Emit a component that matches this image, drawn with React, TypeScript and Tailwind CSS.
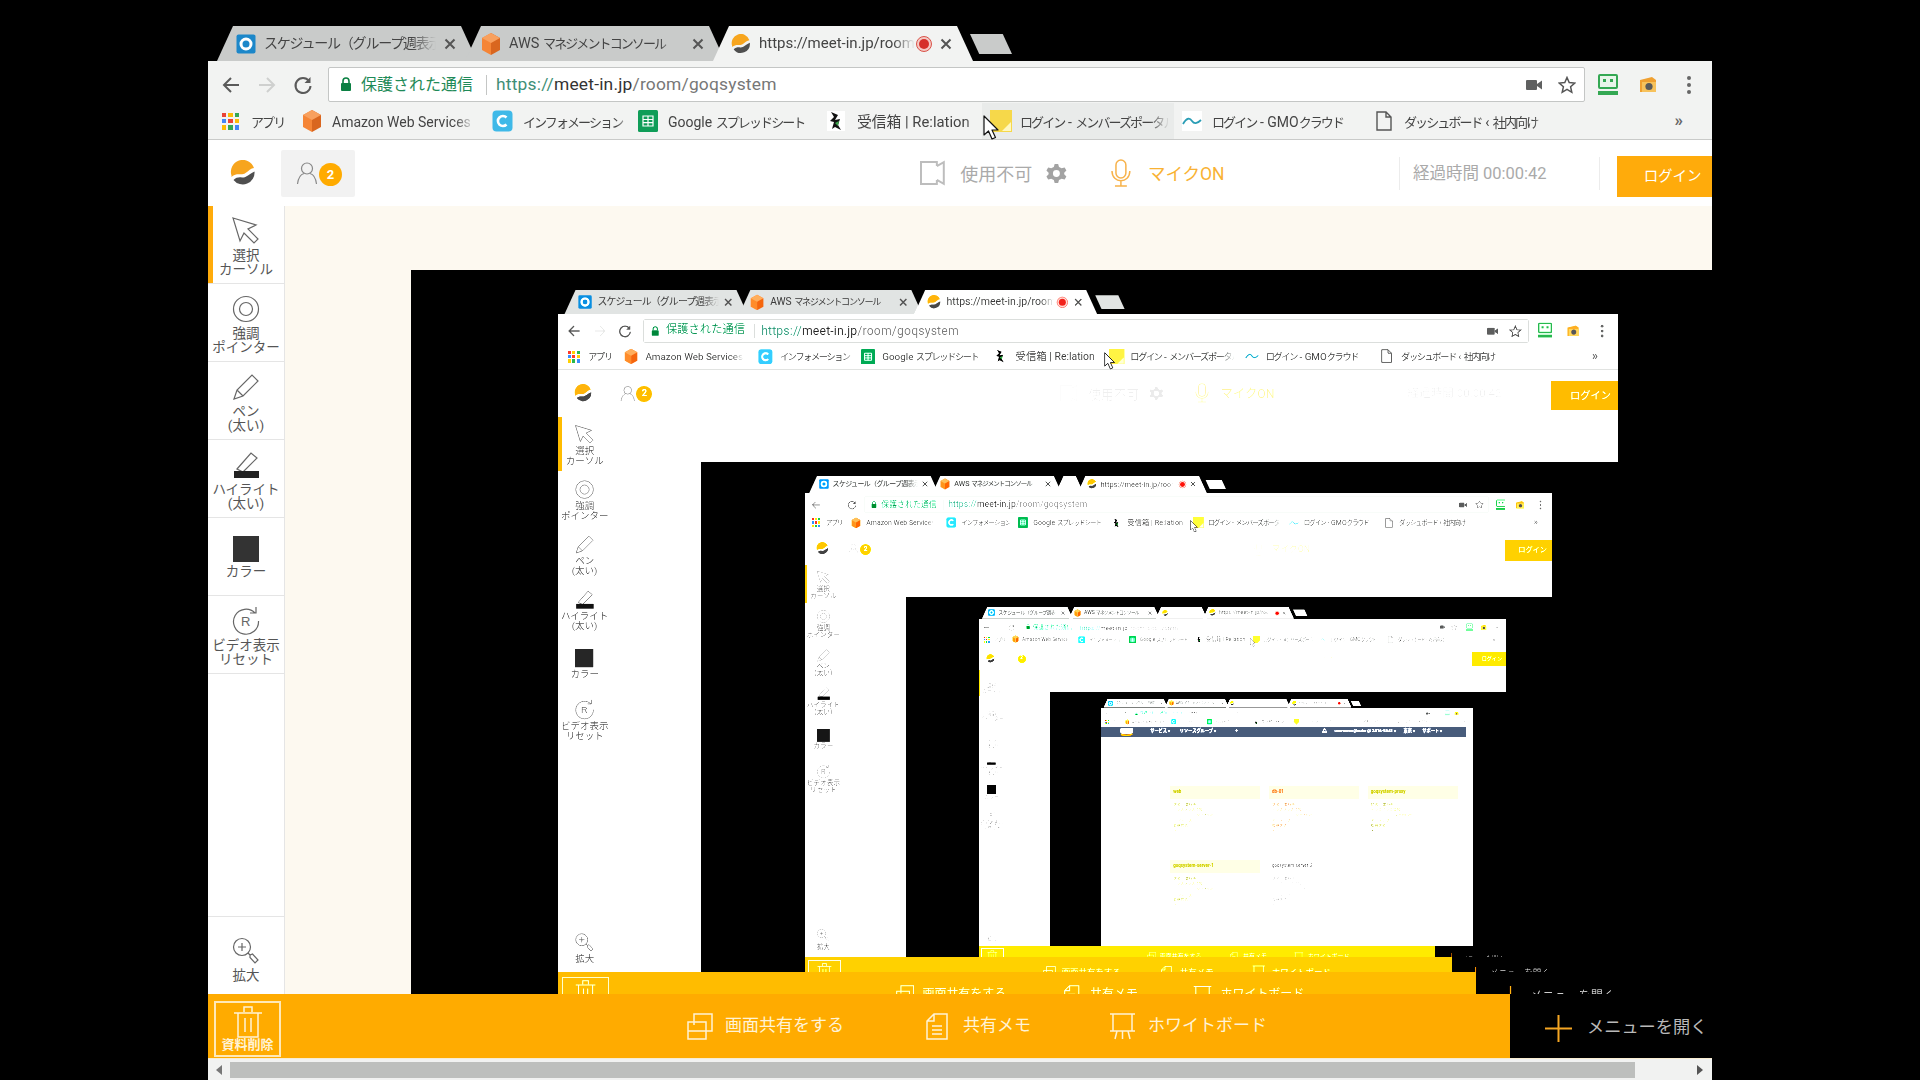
import React from "react";

const fade = "[mask-image:linear-gradient(to_right,black_86%,transparent)]";

const K = ({ children }: { children: React.ReactNode }) => <span className="text-[13px] tracking-[-1.9px]">{children}</span>;

function Logo({ s = 26 }: { s?: number }) {
  return (
    <svg width={s} height={s} viewBox="0 0 26 26" className="shrink-0">
      <path d="M1.5 15.5A11.8 11.8 0 0 1 24 8C21 8 18.5 11 15.5 13C12 15.5 9 13.5 6 14.5C4 15 2.5 16 1.5 17Z" fill="#f7a51e" />
      <path d="M3.5 20C6 17.5 9 17 12 17.5C16 18 19 14 24.5 11.5A11.8 11.8 0 0 1 3.5 20Z" fill="#4f4f4f" />
    </svg>
  );
}
function Cube({ s = 20 }: { s?: number }) {
  return (
    <svg width={s} height={s + 4} viewBox="0 0 20 24" className="shrink-0">
      <path d="M10 1L19 6V18L10 23Z" fill="#d9661f" />
      <path d="M10 1L1 6V18L10 23Z" fill="#f58536" />
      <path d="M10 1L19 6L10 11L1 6Z" fill="#f8a05e" />
    </svg>
  );
}
function Sched() {
  return (
    <svg width="20" height="20" viewBox="0 0 20 20" className="shrink-0">
      <rect x="0.5" y="0.5" width="19" height="19" rx="2" fill="#1c87c9" />
      <circle cx="10" cy="10" r="5" fill="none" stroke="#fff" strokeWidth="3" />
    </svg>
  );
}
function Close() {
  return (
    <svg width="12" height="12" viewBox="0 0 12 12" className="shrink-0">
      <path d="M1.5 1.5L10.5 10.5M10.5 1.5L1.5 10.5" stroke="#555" strokeWidth="2" />
    </svg>
  );
}
function Tab({ w, active, extra, icon, text, rec, pl, cls = "" }: { w: number; active?: boolean; extra?: boolean; icon?: React.ReactNode; text?: React.ReactNode; rec?: boolean; pl: number; cls?: string }) {
  return (
    <div
      className={`relative -ml-[12px] first:ml-0 flex h-[35px] mt-px shrink-0 items-center overflow-hidden [clip-path:polygon(16px_0,calc(100%-16px)_0,100%_100%,0_100%)] ${active || extra ? "bg-[#f2f3f2]" : "bg-[#c9cbca]"} ${active ? "z-10" : ""}`}
      style={{ width: w, paddingLeft: pl }}
    >
      {icon}
      {text && <span className={`ml-2 w-[150px] grow overflow-hidden whitespace-nowrap text-[#444] ${cls} ${fade}`}>{text}</span>}
      {rec && (
        <svg width="18" height="18" viewBox="0 0 18 18" className="-mr-[1px] shrink-0">
          <circle cx="9" cy="9" r="7.5" fill="#f4c9c4" stroke="#d9534a" strokeWidth="1" />
          <circle cx="9" cy="9" r="5" fill="#d6302a" />
        </svg>
      )}
      {text && <span className="mr-[21px] ml-[8px]"><Close /></span>}
    </div>
  );
}
function Tabs({ level }: { level: number }) {
  const extra = [0, 0, 56, 147, 260][level];
  return (
    <div className="flex h-[36px] pl-[9px]">
      <Tab w={260} pl={19} icon={<Sched />} cls="text-[14px] tracking-[-1.2px]" text="スケジュール（グループ週表示" />
      <Tab w={260} pl={16} icon={<Cube />} cls="text-[14.5px]" text={<>AWS <K>マネジメントコンソール</K></>} />
      {extra > 0 && <Tab w={extra} pl={extra > 100 ? 18 : 4} extra icon={extra > 100 ? <Logo s={18} /> : undefined} />}
      <Tab w={260} pl={18} active icon={<Logo s={20} />} cls="text-[15px]" text="https://meet-in.jp/room/goqsystem" rec />
      <div className="mt-[9px] -ml-[3px] h-[20px] w-[42px] bg-[#c9cbca] [clip-path:polygon(0_0,78%_0,100%_100%,22%_100%)]" />
    </div>
  );
}
function Toolbar() {
  return (
    <div className="flex h-[42px] items-center bg-[#f2f3f2] pt-[5px]">
      <svg width="20" height="20" viewBox="0 0 20 20" className="ml-[13px]">
        <path d="M18 10H3M10 3L3 10L10 17" fill="none" stroke="#5a5a5a" strokeWidth="2" />
      </svg>
      <svg width="20" height="20" viewBox="0 0 20 20" className="ml-[16px]">
        <path d="M2 10H17M10 3L17 10L10 17" fill="none" stroke="#cfd0cf" strokeWidth="2" />
      </svg>
      <svg width="20" height="20" viewBox="0 0 20 20" className="ml-[16px]">
        <path d="M16 6A7.5 7.5 0 1 0 17.5 11" fill="none" stroke="#5a5a5a" strokeWidth="2" />
        <path d="M17.5 2V8H11.5Z" fill="#5a5a5a" />
      </svg>
      <div className="ml-[15px] flex h-[35px] w-[1257px] items-center rounded-[2px] border border-[#c4c6c5] bg-white">
        <svg width="12" height="15" viewBox="0 0 12 15" className="ml-[11px]">
          <path d="M3 6V4A3 3 0 0 1 9 4V6" fill="none" stroke="#0b8043" strokeWidth="1.6" />
          <rect x="1" y="6" width="10" height="8" rx="1" fill="#0b8043" />
        </svg>
        <span className="ml-[9px] text-[16px] whitespace-nowrap text-[#1f8a58]">保護された通信</span>
        <span className="ml-[13px] h-[20px] w-px bg-[#c4c6c5]" />
        <span className="ml-[9px] text-[17.4px] tracking-[0.2px] whitespace-nowrap text-[#777]">
          <span className="text-[#3f8f77]">https://</span>
          <span className="text-[#333]">meet-in.jp</span>/room/goqsystem
        </span>
        <svg width="16" height="12" viewBox="0 0 16 12" className="ml-auto">
          <rect x="0" y="1" width="11" height="10" rx="1" fill="#5f6060" />
          <path d="M11 5L16 1.5V10.5L11 7Z" fill="#5f6060" />
        </svg>
        <svg width="18" height="18" viewBox="0 0 18 18" className="mr-[8px] ml-[16px]">
          <path d="M9 1.5L11.2 6.6L16.8 7.1L12.6 10.8L13.8 16.3L9 13.4L4.2 16.3L5.4 10.8L1.2 7.1L6.8 6.6Z" fill="none" stroke="#555" strokeWidth="1.5" />
        </svg>
      </div>
      <svg width="20" height="24" viewBox="0 0 20 24" className="ml-[13px]">
        <rect x="1" y="2" width="18" height="13" rx="1" fill="#e8f5ea" stroke="#34a853" strokeWidth="2" />
        <rect x="5" y="6" width="3" height="3" fill="#34a853" />
        <rect x="12" y="6" width="3" height="3" fill="#34a853" />
        <rect x="0" y="18" width="20" height="4" fill="#34a853" />
      </svg>
      <svg width="20" height="20" viewBox="0 0 20 20" className="ml-[20px]">
        <path d="M2 5L14 2L18 5V17H2Z" fill="#f0a030" />
        <rect x="4" y="7" width="14" height="10" fill="#f7c25c" />
        <circle cx="11" cy="11.5" r="3.6" fill="#5a5a5a" />
      </svg>
      <svg width="6" height="20" viewBox="0 0 6 20" className="ml-[28px]">
        <circle cx="3" cy="3" r="2" fill="#666" />
        <circle cx="3" cy="10" r="2" fill="#666" />
        <circle cx="3" cy="17" r="2" fill="#666" />
      </svg>
    </div>
  );
}
function Apps() {
  const c = ["#ea4335", "#fbbc05", "#34a853", "#4285f4", "#ea4335", "#fbbc05", "#fbbc05", "#34a853", "#4285f4"];
  return (
    <div className="grid h-[17px] w-[17px] shrink-0 grid-cols-3 gap-[2px]">
      {c.map((x, i) => (
        <span key={i} style={{ background: x }} />
      ))}
    </div>
  );
}
function Bm({ w, icon, text, textW, cls = "", gap = 10 }: { w: number; icon: React.ReactNode; text: React.ReactNode; textW: number; cls?: string; gap?: number }) {
  return (
    <div className={`flex h-full shrink-0 items-center ${cls}`} style={{ width: w }}>
      {icon}
      <span className={`overflow-hidden pt-[2px] text-[14px] whitespace-nowrap text-[#444] ${fade}`} style={{ width: textW, marginLeft: gap }}>
        {text}
      </span>
    </div>
  );
}
function Bookmarks() {
  return (
    <div className="relative flex h-[37px] items-center border-b border-[#c9cac9] bg-[#f2f3f2] pl-[14px]">
      <Bm w={80} icon={<Apps />} text={<K>アプリ</K>} textW={40} gap={12} />
      <Bm w={190} icon={<Cube />} text="Amazon Web Services" textW={143} />
      <Bm
        w={146}
        icon={
          <svg width="21" height="22" viewBox="0 0 21 22" className="shrink-0">
            <rect x="0.5" y="0.5" width="20" height="21" rx="4" fill="#3fb9e8" />
            <path d="M14.5 7.5A5 5 0 1 0 14.5 14.5" fill="none" stroke="#fff" strokeWidth="2.6" />
          </svg>
        }
        text={<K>インフォメーション</K>}
        textW={108}
      />
      <Bm
        w={189}
        icon={
          <svg width="20" height="22" viewBox="0 0 20 22" className="shrink-0">
            <rect width="20" height="22" rx="1.5" fill="#0f9d58" />
            <path d="M5 6H15V16H5ZM5 9.5H15M5 12.7H15M10 6V16" fill="none" stroke="#fff" strokeWidth="1.2" />
          </svg>
        }
        text={<>Google <K>スプレッドシート</K></>}
        textW={160}
      />
      <Bm
        w={155}
        icon={
          <svg width="18" height="20" viewBox="0 0 18 20" className="shrink-0">
            <rect width="18" height="20" fill="#fff" />
            <path d="M4 1L11 4L8 9L13 8L11 14L14 19L8 16L5 18L7 11L3 10L7 6Z" fill="#111" />
            <path d="M8 12L12 10L11 15Z" fill="#3aa34a" />
          </svg>
        }
        text={<span className="text-[14.8px]">受信箱 | Re:lation</span>}
        textW={125}
        gap={12}
      />
      <Bm
        w={192}
        cls="bg-[#e9ebea] pl-[8px]"
        icon={
          <svg width="22" height="22" viewBox="0 0 22 22" className="shrink-0">
            <rect width="22" height="22" fill="#f6d84a" />
            <path d="M12 21L21 12V21Z" fill="#fff8c0" />
          </svg>
        }
        text={<><K>ログイン</K> - <K>メンバーズポータル</K></>}
        textW={150}
        gap={8}
      />
      <Bm
        w={194}
        cls="ml-[8px]"
        icon={
          <svg width="20" height="20" viewBox="0 0 20 20" className="shrink-0">
            <rect width="20" height="20" fill="#fff" />
            <path d="M1 13C5 6 8 7 10 10C12 13 15 13 19 9" fill="none" stroke="#2a9db5" strokeWidth="1.8" />
          </svg>
        }
        text={<><K>ログイン</K> - GMO<K>クラウド</K></>}
        textW={148}
      />
      <Bm
        w={180}
        icon={
          <svg width="16" height="20" viewBox="0 0 16 20" className="shrink-0">
            <path d="M1 1H10L15 6V19H1ZM10 1V6H15" fill="none" stroke="#555" strokeWidth="1.4" />
          </svg>
        }
        text={<><K>ダッシュボード</K> ‹ <K>社内向け</K></>}
        textW={150}
        gap={12}
      />
      <span className="absolute top-[5px] right-[29px] text-[17px] font-bold text-[#666]">»</span>
      <svg width="18" height="26" viewBox="0 0 18 26" className="absolute top-[12px] left-[775px] z-20">
        <path d="M1 1V20L5.5 16L9 24L12.5 22.5L9 15H15Z" fill="#fff" stroke="#111" strokeWidth="1.2" strokeLinejoin="round" />
      </svg>
    </div>
  );
}
function Header({ level }: { level: number }) {
  const dim = level > 0 ? "opacity-50" : "";
  return (
    <div className="flex h-[66px] shrink-0 items-center bg-white">
      <div className="ml-[22px]">
        <Logo />
      </div>
      <div className="ml-[25px] flex h-[47px] w-[75px] items-center rounded-[2px] bg-[#f2f2f2] pl-[15px]">
        <svg width="22" height="24" viewBox="0 0 22 24">
          <circle cx="11" cy="7.5" r="5.5" fill="none" stroke="#888" strokeWidth="1.2" />
          <path d="M1.5 23C2.5 15 6 13 8 12.5M20.5 23C19.5 15 16 13 14 12.5" fill="none" stroke="#888" strokeWidth="1.2" />
        </svg>
        <span className="mt-[3px] ml-[1px] flex h-[23px] w-[23px] items-center justify-center rounded-full bg-[#ffab00] text-[13px] font-bold text-white">2</span>
      </div>
      <svg width="25" height="26" viewBox="0 0 25 26" className={`ml-[565px] ${dim}`}>
        <path d="M17 6V2H1V24H17V20M17 6L24 2V24L17 20" fill="none" stroke="#bdbdbd" strokeWidth="2" />
      </svg>
      <span className={`mt-[2px] ml-[15px] text-[18px] whitespace-nowrap text-[#aaa] ${dim}`}>使用不可</span>
      <svg width="21" height="21" viewBox="0 0 24 24" className={`ml-[14px] ${dim}`}>
        <path d="M10 1H14L15 4.5L18 6L21.5 5L23.5 8.5L21 11V13L23.5 15.5L21.5 19L18 18L15 19.5L14 23H10L9 19.5L6 18L2.5 19L.5 15.5L3 13V11L.5 8.5L2.5 5L6 6L9 4.5ZM12 8A4 4 0 1 0 12 16A4 4 0 1 0 12 8Z" fill="#a3a3a3" fillRule="evenodd" />
      </svg>
      <svg width="20" height="28" viewBox="0 0 20 28" className={`ml-[44px] ${dim}`}>
        <rect x="5" y="1" width="10" height="18" rx="5" fill="none" stroke="#f7b24a" strokeWidth="1.5" />
        <path d="M1 12C1 25 19 25 19 12M10 22V27M4 27H16" fill="none" stroke="#f7b24a" strokeWidth="1.5" />
      </svg>
      <span className={`mt-[2px] ml-[17px] w-[74px] text-[17.5px] whitespace-nowrap text-[#f9b233] ${dim}`}>マイクON</span>
      <span className={`ml-[177px] h-[33px] w-px bg-[#ececec] ${dim}`} />
      <span className={`mt-[2px] ml-[13px] w-[138px] text-[16.5px] whitespace-nowrap text-[#aaa] ${dim}`}>経過時間 00:00:42</span>
      <span className={`ml-[49px] h-[33px] w-px bg-[#ececec] ${dim}`} />
      <div className="mt-[7px] ml-[17px] flex h-[41px] w-[96px] items-center bg-[#ffab0b] pl-[27px] text-[14.5px] text-white">ログイン</div>
    </div>
  );
}
const Ic = ({ children }: { children: React.ReactNode }) => (
  <svg width="30" height="30" viewBox="0 0 30 30" fill="none" stroke="#666" strokeWidth="1.2" className="shrink-0">
    {children}
  </svg>
);
const tools: { icon: React.ReactNode; label: string[]; on?: boolean }[] = [
  { icon: <Ic><path d="M2 2L25 9L17 13L27 23L23 27L13 17L9 25Z" /></Ic>, label: ["選択", "カーソル"], on: true },
  { icon: <Ic><circle cx="15" cy="15" r="12.5" /><circle cx="15" cy="15" r="6.5" /></Ic>, label: ["強調", "ポインター"] },
  { icon: <Ic><path d="M3 27L6 18L21 3L27 9L12 24ZM6 18L12 24" /></Ic>, label: ["ペン", "(太い)"] },
  { icon: <Ic><path d="M6 19L20 3L26 8L12 22Z" /><rect x="3" y="21" width="25" height="7" fill="#222" stroke="none" /></Ic>, label: ["ハイライト", "(太い)"] },
  { icon: <svg width="26" height="26" className="mt-[8px] shrink-0"><rect width="26" height="26" fill="#333" /></svg>, label: ["カラー"] },
  { icon: <Ic><path d="M24 7A12.5 12.5 0 1 0 27.5 15M19 7H25V1" /><text x="10" y="20" fontSize="13" fill="#666" stroke="none" fontFamily="Liberation Sans">R</text></Ic>, label: ["ビデオ表示", "リセット"] },
];
function Tool({ icon, label, on, bottom }: { icon: React.ReactNode; label: string[]; on?: boolean; bottom?: boolean }) {
  return (
    <div className={`relative flex h-[78px] w-full shrink-0 flex-col items-center text-center text-[13.5px] leading-[14px] text-[#555] ${bottom ? "border-t border-[#e5e5e5] pt-[19px]" : "border-b border-[#e5e5e5] pt-[10px]"}`}>
      {on && <span className="absolute top-0 bottom-0 left-0 w-[5px] bg-[#ffab0b]" />}
      {icon}
      <div className="mt-[2px] whitespace-nowrap">
        {label.map((l) => (
          <div key={l}>{l}</div>
        ))}
      </div>
    </div>
  );
}
function Sidebar() {
  return (
    <div className="flex w-[77px] shrink-0 flex-col border-r border-[#e5e5e5] bg-white">
      {tools.map((t) => (
        <Tool key={t.label[0]} {...t} />
      ))}
      <div className="mt-auto">
        <Tool
          bottom
          label={["拡大"]}
          icon={
            <Ic>
              <circle cx="11" cy="11" r="8.5" />
              <path d="M7 11H15M11 7V15M17 17L19 19L21.5 18L27 24L24 27L19 21.5L19 19" />
            </Ic>
          }
        />
      </div>
    </div>
  );
}
function BarItem({ icon, text, cls }: { icon: React.ReactNode; text: string; cls: string }) {
  return (
    <div className={`flex shrink-0 items-center text-[17px] whitespace-nowrap text-[#fff3d6] ${cls}`}>
      {icon}
      {text}
    </div>
  );
}
function BottomBar() {
  return (
    <div className="flex h-[65px] shrink-0 border-b border-[#f8ecd0] bg-[#ffab00]">
      <div className="mt-[7px] ml-[6px] flex h-[56px] w-[67px] flex-col items-center border-2 border-[#ffe9b8] pt-[3px] text-[13px] leading-[14px] font-bold whitespace-nowrap text-[#fff3d6]">
        <svg width="30" height="32" viewBox="0 0 30 32" fill="none" stroke="#fff3d6" strokeWidth="1.5">
          <path d="M11 6V1H19V6M1 7H29M5 7V31H25V7M12 12V26M18 12V26" />
        </svg>
        資料削除
      </div>
      <BarItem
        cls="ml-[406px]"
        text="画面共有をする"
        icon={
          <svg width="26" height="27" viewBox="0 0 26 27" fill="none" stroke="#fff3d6" strokeWidth="1.5" className="mr-[12px]">
            <path d="M7 12V1H25V18H13M1 9H19V26H1ZM1 18H19" />
          </svg>
        }
      />
      <BarItem
        cls="ml-[82px]"
        text="共有メモ"
        icon={
          <svg width="22" height="27" viewBox="0 0 22 27" fill="none" stroke="#fff3d6" strokeWidth="1.5" className="mr-[15px]">
            <path d="M8 1H21V26H1V8ZM8 1V8H1M6 13H16M6 17H16M6 21H16" />
          </svg>
        }
      />
      <BarItem
        cls="ml-[78px]"
        text="ホワイトボード"
        icon={
          <svg width="27" height="28" viewBox="0 0 27 28" fill="none" stroke="#fff3d6" strokeWidth="1.5" className="mr-[12px]">
            <path d="M1 2H26M4 2V19H23V2M1 19H26M8 19L6 27M19 19L21 27M13.5 19V27" />
          </svg>
        }
      />
      <div className="ml-auto flex w-[202px] shrink-0 items-center overflow-hidden bg-black pt-[4px] pl-[35px] text-[17.2px] whitespace-nowrap text-[#b9b9b9]">
        <svg width="27" height="27" viewBox="0 0 27 27" className="mr-[15px] shrink-0">
          <path d="M13.5 0V27M0 13.5H27" stroke="#f5a623" strokeWidth="2" />
        </svg>
        メニューを開く
      </div>
    </div>
  );
}
function Scrollbar() {
  return (
    <div className="flex h-[21px] shrink-0 items-center bg-[#f1f2f1]">
      <svg width="8" height="10" viewBox="0 0 8 10" className="ml-[7px]">
        <path d="M7 0V10L1 5Z" fill="#777" />
      </svg>
      <div className="ml-[7px] h-[16px] w-[1405px] bg-[#bdbfbd]" />
      <svg width="8" height="10" viewBox="0 0 8 10" className="ml-auto mr-[8px]">
        <path d="M1 0V10L7 5Z" fill="#555" />
      </svg>
    </div>
  );
}
const cards = [
  { name: "web", tc: "text-[#8f8f2a]", bg: "bg-[#a8a89c]", l: "text-[#777a4c]" },
  { name: "db-01", tc: "text-[#a8683a]", bg: "bg-[#a8a89c]", l: "text-[#8d6a50]" },
  { name: "goqsystem-proxy", tc: "text-[#8f8f2a]", bg: "bg-[#a8a89c]", l: "text-[#777a4c]" },
  { name: "goqsystem-server-1", tc: "text-[#8f8f2a]", bg: "bg-[#a8a89c]", l: "text-[#777a4c]" },
  { name: "goqsystem-server-2", tc: "text-[#444]", bg: "", l: "text-[#777]" },
];
function AwsPage() {
  return (
    <div className="h-[900px] bg-white">
      <div className="mr-[26px] -mt-[6px] flex h-[47px] items-center bg-[#5a626f] text-[17px] font-bold whitespace-nowrap text-white">
        <svg width="54" height="36" viewBox="0 0 54 36" className="ml-[77px]">
          <rect x="2" y="4" width="50" height="22" rx="6" fill="#fff" />
          <path d="M4 30C20 36 36 36 50 28" fill="none" stroke="#f90" strokeWidth="5" />
        </svg>
        <span className="ml-[67px]">サービス ▾</span>
        <span className="ml-[40px]">リソースグループ ▾</span>
        <span className="ml-[78px]">✦</span>
        <span className="ml-[340px]">🔔︎</span>
        <span className="ml-[30px]">username@cube @ 2416-5641 ▾</span>
        <span className="ml-[30px]">東京 ▾</span>
        <span className="ml-[30px]">サポート ▾</span>
      </div>
      <div className="grid grid-cols-[365px_365px_365px] gap-x-[35px] gap-y-[25px] pt-[196px] pl-[279px]">
        {cards.map((c) => (
          <div key={c.name} className="h-[275px] text-[15px] leading-[20px] font-medium">
            <div className={`flex h-[53px] items-center px-3 text-[18px] font-bold ${c.bg} ${c.tc}`}>{c.name}</div>
            <div className={`mt-4 px-3 whitespace-nowrap ${c.l}`}>
              <div className="font-bold">状態： 実行中 ━ ━ ━</div>
              <div>インスタンス情報 ━ ━ ━ ━ ━ ━ ━ ━ ━</div>
              <div className="pl-24">t2.medium</div>
              <div className="mt-2">IP アドレス ━ ━ ━ ━ ━ ━ ━ ━ ━ ━</div>
              <div className="font-bold">監視状態 ━ ━ ━ ━ ━ ━ ━ ━ ━</div>
              <div>▪ ━ ━ ━ ━ ━ ━ ━ ━ ━ ━ ━ ━ ━ ━</div>
            </div>
          </div>
        ))}
      </div>
    </div>
  );
}
function Room({ level }: { level: number }) {
  return (
    <>
      <Header level={level} />
      <div className="flex min-h-0 flex-1 overflow-hidden">
        <Sidebar />
        <div className="min-w-0 flex-1 overflow-hidden bg-[#fdf9f0] pt-[64px] pl-[126px]">
          <div className="h-full overflow-hidden bg-black pt-[19px] pl-[147px]">
            <Browser level={level + 1} />
          </div>
        </div>
      </div>
      <BottomBar />
      <Scrollbar />
    </>
  );
}
function Browser({ level }: { level: number }) {
  return (
    <div
      className={`flex h-[1055px] w-[1504px] shrink-0 flex-col ${level > 0 ? "brightness-[1.04] contrast-[1.2] blur-[0.2px]" : ""}`}
      style={level > 0 ? { zoom: 0.705 } : undefined}
    >
      <Tabs level={level} />
      <Toolbar />
      <Bookmarks />
      {level < 4 ? <Room level={level} /> : <AwsPage />}
    </div>
  );
}
export default function App() {
  return (
    <div className="h-[1080px] w-[1920px] overflow-hidden bg-black pt-[25px] pl-[208px] blur-[0.3px] [font-family:Roboto,'Noto_Sans_CJK_JP',sans-serif]">
      <Browser level={0} />
    </div>
  );
}
